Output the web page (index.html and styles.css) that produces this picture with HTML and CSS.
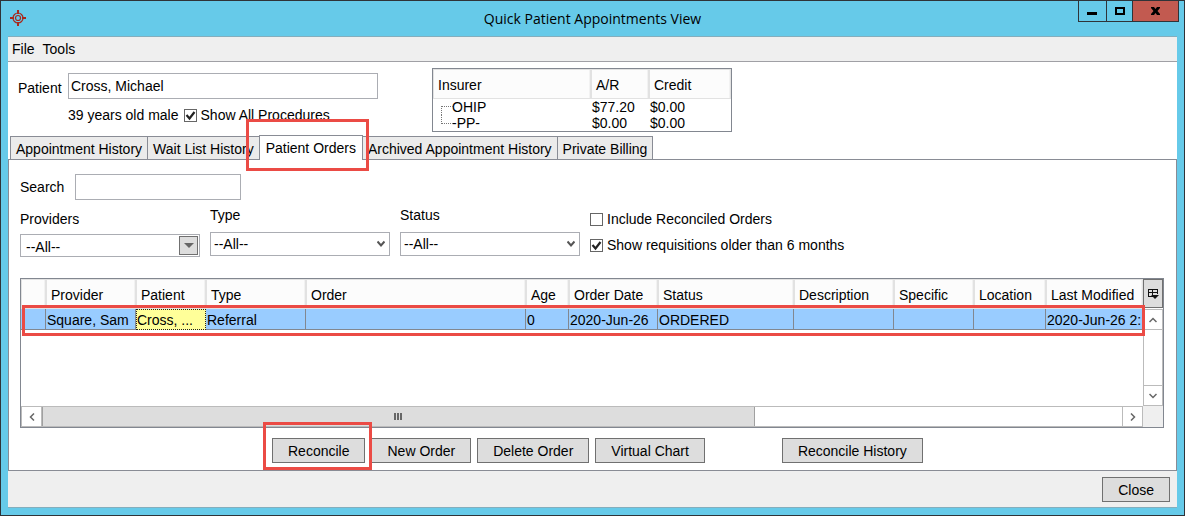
FILE: index.html
```html
<!DOCTYPE html>
<html lang="en">
<head>
<meta charset="utf-8">
<title>Quick Patient Appointments View</title>
<link rel="stylesheet" href="styles.css">
</head>
<body>
<div class="window">
  <header class="titlebar">
    <svg class="app-icon" width="16" height="16" viewBox="0 0 16 16" fill="none" stroke="#a8281c">
      <circle cx="8" cy="8" r="5" stroke-width="1.2"/>
      <circle cx="8" cy="8" r="2.5" stroke-width="1.2"/>
      <path d="M8 0v4M8 12v4M0 8h4M12 8h4" stroke-width="2"/>
    </svg>
    <h1 class="title">Quick Patient Appointments View</h1>
    <div class="window-buttons">
      <button class="win-btn" type="button" aria-label="Minimize"><svg width="27" height="20" viewBox="0 0 27 20"><path d="M8 11h10v3H8z"/></svg></button>
      <button class="win-btn win-max" type="button" aria-label="Maximize"><svg width="25" height="20" viewBox="0 0 25 20"><path d="M8 6h10v8H8zM10 8v4h6V8z" fill-rule="evenodd"/></svg></button>
      <button class="win-btn win-close" type="button" aria-label="Close window"><svg width="45" height="20" viewBox="0 0 45 20"><path d="M18 6h3l1.500 2 1.500-2h3v1l-2.500 3 2.500 3v1h-3l-1.500-2-1.500 2h-3v-1l2.500-3-2.500-3z"/></svg></button>
    </div>
  </header>

  <div class="client">
    <nav class="menubar">
      <button class="menu" type="button">File</button>
      <button class="menu" type="button">Tools</button>
    </nav>

    <section class="summary">
      <div class="patient">
        <label class="patient-label" for="patient">Patient</label>
        <input class="text-box" id="patient" type="text" value="Cross, Michael">
        <div class="patient-info">
          <span>39 years old male</span>
          <label class="check"><input type="checkbox" checked>Show All Procedures</label>
        </div>
      </div>
      <table class="insurers">
        <colgroup><col class="c-insurer"><col class="c-ar"><col></colgroup>
        <thead><tr><th>Insurer</th><th>A/R</th><th>Credit</th></tr></thead>
        <tbody>
          <tr><td class="branch branch-first">OHIP</td><td>$77.20</td><td>$0.00</td></tr>
          <tr><td class="branch branch-last">-PP-</td><td>$0.00</td><td>$0.00</td></tr>
        </tbody>
      </table>
    </section>

    <div class="tabs" role="tablist">
      <button class="tab" type="button" role="tab">Appointment History</button>
      <button class="tab" type="button" role="tab">Wait List History</button>
      <div class="marked">
        <button class="tab tab-active" type="button" role="tab" aria-selected="true">Patient Orders</button>
        <span class="mark mark-tab"></span>
      </div>
      <button class="tab" type="button" role="tab">Archived Appointment History</button>
      <button class="tab" type="button" role="tab">Private Billing</button>
    </div>

    <main class="panel" role="tabpanel">
      <div class="search-row">
        <label for="search">Search</label>
        <input class="text-box" id="search" type="text">
      </div>

      <div class="filters">
        <div class="field field-providers">
          <label for="providers">Providers</label>
          <div class="combo combo-button">
            <select id="providers"><option>--All--</option></select>
            <span class="combo-arrow"><svg width="17" height="17" viewBox="0 0 17 17"><path d="M4 6h10l-5 5z" fill="#666"/></svg></span>
          </div>
        </div>
        <div class="field">
          <label for="type">Type</label>
          <div class="combo">
            <select id="type"><option>--All--</option></select>
            <span class="combo-arrow"><svg width="8" height="8" viewBox="0 0 8 8"><path d="M0.500 1.500l3.500 4 3.500-4" fill="none" stroke="#555" stroke-width="2"/></svg></span>
          </div>
        </div>
        <div class="field">
          <label for="status">Status</label>
          <div class="combo">
            <select id="status"><option>--All--</option></select>
            <span class="combo-arrow"><svg width="8" height="8" viewBox="0 0 8 8"><path d="M0.500 1.500l3.500 4 3.500-4" fill="none" stroke="#555" stroke-width="2"/></svg></span>
          </div>
        </div>
        <div class="options">
          <label class="check"><input type="checkbox">Include Reconciled Orders</label>
          <label class="check"><input type="checkbox" checked>Show requisitions older than 6 months</label>
        </div>
      </div>

      <div class="grid">
        <div class="grid-view">
          <table class="orders">
            <colgroup>
              <col class="w-mark"><col class="w-provider"><col class="w-patient"><col class="w-type"><col><col class="w-age"><col class="w-date"><col class="w-status"><col class="w-desc"><col class="w-spec"><col class="w-loc"><col class="w-mod">
            </colgroup>
            <thead>
              <tr><th></th><th>Provider</th><th>Patient</th><th>Type</th><th>Order</th><th>Age</th><th>Order Date</th><th>Status</th><th>Description</th><th>Specific</th><th>Location</th><th>Last Modified</th></tr>
            </thead>
            <tbody>
              <tr><td></td><td>Square, Sam</td><td class="focused">Cross, ...</td><td>Referral</td><td></td><td>0</td><td>2020-Jun-26</td><td>ORDERED</td><td></td><td></td><td></td><td>2020-Jun-26 2:</td></tr>
            </tbody>
          </table>
        </div>
        <div class="v-side">
          <button class="col-control" type="button" aria-label="Choose columns"><svg width="12" height="12" viewBox="0 0 12 12"><path d="M1 1.500h10M1 4.500h10M1.500 1v8M5.500 1v8M10.500 1v5M1 8.500h5" fill="none" stroke="#111"/><path d="M4 7h8l-4 4z" fill="#111"/></svg></button>
          <button class="arrow arrow-up" type="button" aria-label="Scroll up"><svg width="8" height="8" viewBox="0 0 8 8"><path d="M0.500 6l3.500-3.500L7.500 6"/></svg></button>
          <div class="v-track"></div>
          <button class="arrow arrow-down" type="button" aria-label="Scroll down"><svg width="8" height="8" viewBox="0 0 8 8"><path d="M0.500 2l3.500 3.500L7.500 2"/></svg></button>
        </div>
        <div class="h-bar">
          <button class="arrow arrow-left" type="button" aria-label="Scroll left"><svg width="8" height="8" viewBox="0 0 8 8"><path d="M6 0.500L2.500 4 6 7.500"/></svg></button>
          <div class="h-track"><div class="h-thumb"><svg width="8" height="7" viewBox="0 0 8 7"><path d="M1 0v7M4 0v7M7 0v7" stroke="#666" stroke-width="2"/></svg></div></div>
          <button class="arrow arrow-right" type="button" aria-label="Scroll right"><svg width="8" height="8" viewBox="0 0 8 8"><path d="M2 0.500L5.500 4 2 7.500"/></svg></button>
        </div>
        <div class="corner"></div>
        <span class="mark mark-row"></span>
      </div>

      <div class="actions">
        <div class="marked">
          <button class="btn" type="button">Reconcile</button>
          <span class="mark mark-button"></span>
        </div>
        <button class="btn" type="button">New Order</button>
        <button class="btn" type="button">Delete Order</button>
        <button class="btn" type="button">Virtual Chart</button>
        <button class="btn btn-history" type="button">Reconcile History</button>
      </div>
    </main>

    <footer class="footer"><button class="btn" type="button">Close</button></footer>
  </div>
</div>
</body>
</html>
```
FILE: styles.css
```css
* { box-sizing: border-box; }

body {
  margin: 0;
  font: 14px/16px "Liberation Sans", Arial, sans-serif;
  color: #000;
}

button, input, select {
  font: inherit;
  color: inherit;
  border-radius: 0;
  margin: 0;
}

svg { display: block; }

.window {
  display: flex;
  flex-direction: column;
  min-height: 100vh;
  padding: 0 7px 7px;
  border: 1px solid #2f3338;
  background: #66cae9;
}

/* Title bar */
.titlebar {
  position: relative;
  display: flex;
  align-items: center;
  justify-content: center;
  height: 35px;
}
.app-icon { position: absolute; left: 2px; top: 9px; }
.title {
  margin: 0;
  font: 14px/20px "Open Sans", "Noto Sans", sans-serif;
}
.window-buttons {
  position: absolute;
  right: -2px;
  top: 0;
  display: flex;
  border: 1px solid #2f3338;
  border-top: 0;
}
.win-btn { padding: 0; border: 0; background: none; }
.win-btn + .win-btn { border-left: 1px solid #2f3338; }
.win-close { background: #c25a50; }

/* Client area */
.client {
  flex: 1;
  display: flex;
  flex-direction: column;
  border-top: 1px solid #84aebd;
  border-bottom: 1px solid #84aebd;
  background: #fff;
}
.menubar {
  display: flex;
  gap: 8px;
  padding: 4px;
  border-bottom: 1px solid #a0a0a5;
  background: #efefef;
}
.menu { padding: 0; border: 0; background: none; }

.summary {
  display: flex;
  align-items: flex-start;
  gap: 54px;
  padding: 6px 10px 3px;
}
.patient {
  display: grid;
  grid-template-columns: 50px 310px;
  align-items: center;
  row-gap: 8px;
  padding-top: 5px;
}
.patient-label { padding-top: 4px; }
.patient-info { grid-column: 2; display: flex; gap: 5px; }

.text-box {
  height: 26px;
  padding: 0 2px;
  border: 1px solid #abadb3;
  background: #fff;
}

.check { display: flex; align-items: center; gap: 4px; }
.check input {
  appearance: none;
  width: 13px;
  height: 13px;
  border: 1px solid #666;
  background: #fff;
}
.check input:checked {
  background: #fff url("data:image/svg+xml,%3Csvg xmlns='http://www.w3.org/2000/svg' viewBox='0 0 11 11'%3E%3Cpath d='M1.500 5l3 3.500L9.500 2' fill='none' stroke='%23222' stroke-width='2.200'/%3E%3C/svg%3E");
}

table { border-collapse: separate; border-spacing: 0; table-layout: fixed; }
th, td { font-weight: normal; text-align: left; white-space: nowrap; overflow: hidden; }
th {
  border: 1px solid #e2e2e2;
  background: #fcfcfc;
  box-shadow: inset -1px 0 #f2f2f2;
}

.insurers { width: 300px; border: 1px solid #828790; }
.insurers th { height: 30px; padding: 2px 4px 0; }
.insurers td { height: 16px; padding: 1px 1px 0; line-height: 15px; }
.c-insurer { width: 158px; }
.c-ar { width: 58px; }
.insurers .branch { position: relative; padding-left: 19px; }
.branch::before {
  content: "";
  position: absolute;
  left: 8px;
  width: 11px;
  height: 8px;
  border-left: 1px dotted #777;
}
.branch-first::before { bottom: 0; border-top: 1px dotted #777; }
.branch-last::before { top: 0; border-bottom: 1px dotted #777; }

/* Tabs */
.tabs { display: flex; align-items: flex-end; padding-left: 2px; }
.tab {
  height: 23px;
  margin-right: -1px;
  padding: 2px 5px 0;
  border: 1px solid #898c95;
  border-bottom: 0;
  background: #ebebeb;
  white-space: nowrap;
}
.tab-active {
  position: relative;
  height: 25px;
  margin-bottom: -1px;
  padding: 0 6px;
  background: #fff;
}
.marked { position: relative; z-index: 1; display: flex; }
.mark {
  position: absolute;
  z-index: 2;
  border: 3px solid #eb4b45;
  pointer-events: none;
}
.mark-tab { inset: -16px -7px -12px -13px; }
.mark-button { inset: -16px -7px -7px -9px; }
.mark-row { top: 26px; left: 1px; right: 18px; height: 31px; }

.panel {
  flex: 1;
  padding: 14px 12px 7px 11px;
  border: 1px solid #898c95;
}
.search-row { display: flex; align-items: center; gap: 11px; }
.search-row .text-box { width: 166px; }

.filters { display: flex; gap: 10px; padding: 7px 0 21px; }
.field { display: flex; flex-direction: column; gap: 9px; width: 180px; }
.field-providers { padding-top: 4px; gap: 7px; }
.combo { position: relative; display: flex; }
.combo select {
  appearance: none;
  width: 100%;
  height: 24px;
  padding: 0 3px;
  border: 1px solid #abadb3;
  background: #fff;
}
.combo-arrow { position: absolute; right: 5px; top: 8px; pointer-events: none; }
.combo-button select { height: 23px; padding: 2px 5px 0; }
.combo-button .combo-arrow {
  right: 2px;
  top: 2px;
  border: 1px solid #707070;
  background: #ddd;
}
.options { display: flex; flex-direction: column; gap: 10px; padding-top: 4px; }

/* Orders grid */
.grid {
  position: relative;
  display: grid;
  grid-template-columns: minmax(0, 1fr) 20px;
  grid-template-rows: 127px 21px;
  border: 1px solid #828790;
}
.grid-view { overflow: hidden; }
.orders { width: 100%; }
.orders th { height: 30px; padding: 2px 4px 0; }
.orders td {
  height: 21px;
  padding: 1px 1px 0;
  border: solid #828790;
  border-width: 0 1px 1px 0;
  background: #99ccff;
}
.orders td:last-child { border-right: 0; }
.orders .focused { padding: 0; border: 1px dotted #222; background: #ffff99; }
.w-mark { width: 25px; }
.w-provider { width: 90px; }
.w-patient { width: 70px; }
.w-type { width: 100px; }
.w-age { width: 43px; }
.w-date { width: 89px; }
.w-status { width: 136px; }
.w-desc { width: 100px; }
.w-spec { width: 80px; }
.w-loc { width: 72px; }
.w-mod { width: 97px; }

.v-side { display: flex; flex-direction: column; }
.col-control {
  display: grid;
  place-items: center;
  height: 29px;
  margin-bottom: 1px;
  padding: 0;
  border: 1px solid #707070;
  background: #ddd;
}
.arrow {
  display: grid;
  place-items: center;
  width: 21px;
  height: 21px;
  padding: 0;
  border: 1px solid #bbb;
  background: #fff;
}
.v-side .arrow { width: 100%; }
.arrow path { fill: none; stroke: #666; stroke-width: 1.500; }
.v-track { flex: 1; border: solid #bbb; border-width: 0 1px; }
.h-bar { display: flex; }
.h-track { flex: 1; border: solid #bbb; border-width: 1px 0; }
.h-thumb {
  display: grid;
  place-items: center;
  width: 66%;
  height: 100%;
  border: solid #a0a0a0;
  border-width: 0 1px;
  background: #ddd;
}
.corner { background: #efefef; }

.actions { display: flex; gap: 6px; padding: 10px 0 0 252px; }
.btn {
  height: 25px;
  padding: 0 15px;
  border: 1px solid #707070;
  background: #ddd;
  white-space: nowrap;
}
.btn-history { margin-left: 71px; }

.footer {
  display: flex;
  justify-content: flex-end;
  padding: 6px 7px 5px;
  background: #efefef;
}
```
